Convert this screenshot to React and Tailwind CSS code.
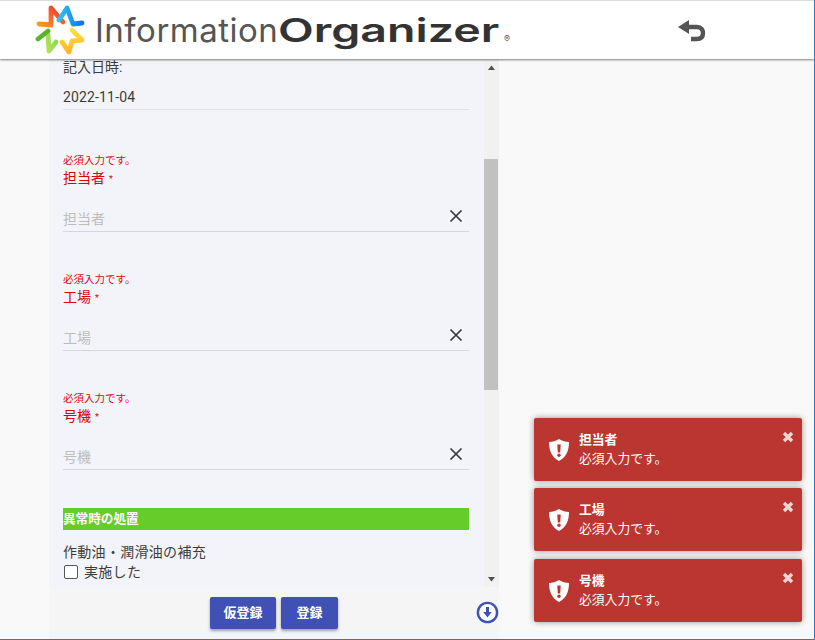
import React from "react";

const Cross = () => (
  <svg width="16" height="16" viewBox="0 0 16 16" className="absolute right-[5px] top-[-1px]">
    <path d="M2.5 2.5 L13.5 13.5 M13.5 2.5 L2.5 13.5" stroke="#33383d" strokeWidth="1.7" fill="none" />
  </svg>
);

function Field({ label }) {
  return (
    <div className="h-[119px] pt-[44px]">
      <div className="text-[10.5px] leading-[14px] text-[#dd0a14]">必須入力です。</div>
      <div className="text-[14px] leading-[20px] text-[#d8000c]">
        {label}
        <span className="ml-[4px] align-[1px] text-[9px] leading-[12px]">*</span>
      </div>
      <div className="relative mt-[21px] h-[23px] border-b border-[#d5d6da]">
        <span className="absolute left-0 top-0 text-[14px] leading-[20px] text-[#bdbdbd]">{label}</span>
        <Cross />
      </div>
    </div>
  );
}

function Toast({ title, extra }) {
  return (
    <div className={`relative flex h-[63px] w-[268px] items-center rounded-[2px] bg-[#bb3630] pl-[14px] text-white shadow-[0_0_6px_rgba(0,0,0,0.4)] ${extra || ""}`}>
      <svg width="22" height="24" viewBox="0 0 22 24" className="mt-[1px]">
        <path d="M11 1 C14 3 17.5 4 21 4 C21 13 18 19.5 11 23 C4 19.5 1 13 1 4 C4.5 4 8 3 11 1 Z" fill="#fff" />
        <path d="M9.3 6.5 H12.7 L12.2 14.5 H9.8 Z" fill="#bb3630" />
        <circle cx="11" cy="17.3" r="1.7" fill="#bb3630" />
      </svg>
      <div className="mb-[2px] ml-[9px] text-[12.8px] leading-[19px]">
        <div className="font-bold">{title}</div>
        <div>必須入力です。</div>
      </div>
      <svg width="12" height="12" viewBox="0 0 12 12" className="absolute right-[8px] top-[13px] opacity-80">
        <path d="M2 2 L10 10 M10 2 L2 10" stroke="#fff" strokeWidth="3.4" fill="none" />
      </svg>
    </div>
  );
}

function Logo() {
  return (
    <svg width="50" height="50" viewBox="34 5 50 50" className="shrink-0" fill="none" strokeWidth="4.8" strokeLinecap="round" strokeLinejoin="round">
      <defs>
        <linearGradient id="la" x1="0" y1="1" x2="1" y2="0"><stop offset="0" stopColor="#ff9a1a" /><stop offset="1" stopColor="#f0303c" /></linearGradient>
        <linearGradient id="lb" x1="0" y1="0" x2="1" y2="0"><stop offset="0" stopColor="#2fc4ee" /><stop offset="1" stopColor="#1075ee" /></linearGradient>
        <linearGradient id="lc" x1="0" y1="0" x2="0" y2="1"><stop offset="0" stopColor="#ffe23a" /><stop offset="1" stopColor="#ffb52a" /></linearGradient>
        <linearGradient id="ld" x1="0" y1="1" x2="1" y2="0"><stop offset="0" stopColor="#b6e05a" /><stop offset="1" stopColor="#86d84a" /></linearGradient>
      </defs>
      <path d="M38 24 L50 25 L50 8 L62 22" stroke="url(#la)" />
      <path d="M58 20 L66 8 L72 24 L81 23" stroke="url(#lb)" />
      <path d="M71 30 L81 40 L71 41 L68 52 L61 42" stroke="url(#lc)" />
      <path d="M55 42 L48 51 L47 35" stroke="url(#ld)" />
      <path d="M37 39 L47 31" stroke="#55b52a" />
    </svg>
  );
}

export default function App() {
  return (
    <div className="relative flex h-[640px] w-[815px] flex-col overflow-hidden border-r border-b border-[#2a7cc7] bg-[#f9f9f9] font-['Roboto','Noto_Sans_CJK_JP',sans-serif]">
      <header className="z-10 flex h-[59px] shrink-0 items-center border-t border-t-[#dcdcdc] bg-white pl-[35px] shadow-[0_1px_2px_rgba(0,0,0,0.5)]">
        <Logo />
        <div className="ml-[10px] flex items-baseline whitespace-nowrap font-['Inter',sans-serif] leading-none">
          <span className="w-[183px] text-[33px] tracking-[0.5px] text-[#555]">Information</span>
          <span className="w-[226px]">
            <span className="inline-block origin-left scale-x-[1.41] text-[33px] font-semibold text-[#333]">Organizer</span>
          </span>
          <span className="text-[9px] text-[#555]">®</span>
        </div>
        <svg width="30" height="24" viewBox="0 0 30 24" className="absolute left-[676px] top-[19px]">
          <path d="M2 8 L13 1 V15 Z" fill="#555" />
          <path d="M12 8 H21 C25.5 8 27 11 27 14 C27 18 25 20 21 20 H15" stroke="#555" strokeWidth="4.4" fill="none" />
        </svg>
      </header>

      <main className="ml-[49px] flex w-[450px] flex-1 flex-col bg-[#f5f5f5]">
        <div className="flex h-[528px] shrink-0 overflow-hidden">
          <div className="w-[435px] shrink-0 overflow-hidden bg-[#f3f4f9] pl-[14px] pr-[15px] text-[14px] text-[#3c3c3c]">
            <div className="mt-[-2px] leading-[20px]">記入日時:</div>
            <div className="mt-[10px] h-[23px] border-b border-[#e0e1e6] leading-[20px] tracking-[0.15px]">2022-11-04</div>
            <Field label="担当者" />
            <Field label="工場" />
            <Field label="号機" />
            <div className="mt-[41px] h-[22px] bg-[#66cc2a] text-[12.6px] font-bold leading-[22px] text-white">異常時の処置</div>
            <div className="mt-[12px] leading-[20px] tracking-[0.3px]">作動油・潤滑油の補充</div>
            <label className="flex h-[20px] items-center">
              <span className="ml-[1px] block h-[14px] w-[14px] rounded-[2px] border border-[#555] bg-white" />
              <span className="ml-[6px] tracking-[0.3px]">実施した</span>
            </label>
          </div>
          <div className="relative w-[15px] shrink-0 bg-[#f1f1f1]">
            <svg width="9" height="6" viewBox="0 0 9 6" className="absolute left-[3px] top-[6px]"><path d="M4.5 0.5 L8 5 H1 Z" fill="#505050" /></svg>
            <div className="absolute left-0 top-[100px] h-[231px] w-[14px] bg-[#c1c1c1]" />
            <svg width="9" height="6" viewBox="0 0 9 6" className="absolute bottom-[5px] left-[3px]"><path d="M4.5 5.5 L8 1 H1 Z" fill="#505050" /></svg>
          </div>
        </div>
        <div className="relative flex flex-1 justify-center gap-[5px] pt-[10px]">
          <button className="h-[32px] w-[66px] rounded-[2px] bg-[#3f51b5] text-[13px] font-bold text-white shadow-[0_2px_3px_rgba(0,0,0,0.35)]">仮登録</button>
          <button className="h-[32px] w-[57px] rounded-[2px] bg-[#3f51b5] text-[13px] font-bold text-white shadow-[0_2px_3px_rgba(0,0,0,0.35)]">登録</button>
          <svg width="23" height="23" viewBox="0 0 23 23" className="absolute left-[427px] top-[14px]">
            <circle cx="11.5" cy="11.5" r="9.6" fill="#fff" stroke="#3f51b5" strokeWidth="2.4" />
            <path d="M10 6 H13 V11 H15.8 L11.5 16.5 L7.2 11 H10 Z" fill="#3f51b5" />
          </svg>
        </div>
      </main>

      <div className="absolute left-[534px] top-[418px] flex flex-col gap-[7px]">
        <Toast title="担当者" />
        <Toast title="工場" />
        <Toast title="号機" extra="mt-[1px]" />
      </div>
    </div>
  );
}
